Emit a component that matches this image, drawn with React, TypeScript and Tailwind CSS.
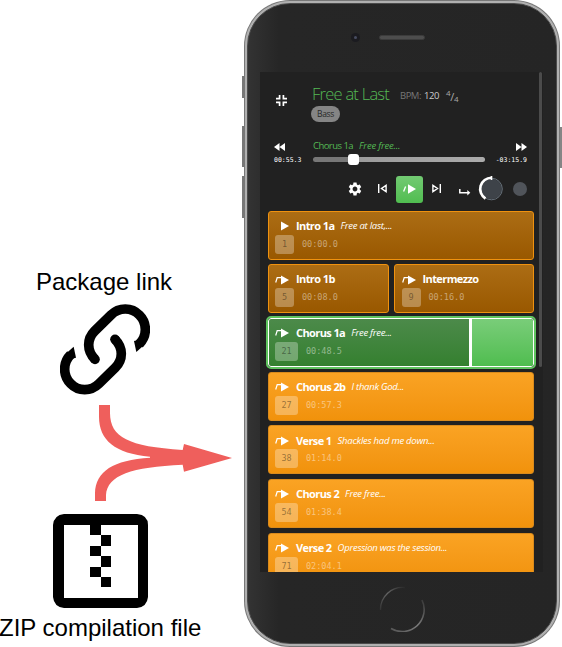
import React from "react";

type Section = {
  title: string;
  lyric?: string;
  bar: string;
  time: string;
  tone: "dim" | "bright" | "active";
  start?: boolean;
  width?: string;
};

const rows: Section[][] = [
  [{ title: "Intro 1a", lyric: "Free at last,...", bar: "1", time: "00:00.0", tone: "dim", start: true }],
  [
    { title: "Intro 1b", bar: "5", time: "00:08.0", tone: "dim", width: "w-[121.5px]" },
    { title: "Intermezzo", bar: "9", time: "00:16.0", tone: "dim" },
  ],
  [{ title: "Chorus 1a", lyric: "Free free...", bar: "21", time: "00:48.5", tone: "active" }],
  [{ title: "Chorus 2b", lyric: "I thank God...", bar: "27", time: "00:57.3", tone: "bright" }],
  [{ title: "Verse 1", lyric: "Shackles had me down...", bar: "38", time: "01:14.0", tone: "bright" }],
  [{ title: "Chorus 2", lyric: "Free free...", bar: "54", time: "01:38.4", tone: "bright" }],
  [{ title: "Verse 2", lyric: "Opression was the session...", bar: "71", time: "02:04.1", tone: "bright" }],
];

const tones = {
  dim: "border border-[#f0920f] bg-linear-to-b from-[#ac6d14] to-[#995800]",
  bright: "border border-[#d98a1c] bg-linear-to-b from-[#faa323] to-[#f1920b]",
  active:
    "border border-white outline-2 outline-[#5fc45f] bg-linear-to-b from-[#4c8a4a] to-[#34802f]",
};

function JumpPlay({ start = false }: { start?: boolean }) {
  return (
    <svg className="h-[10px] w-[14px] shrink-0" viewBox="0 0 14 10">
      {!start && <path d="M.7 7.500 2.200 2.700H7" fill="none" stroke="#fff" strokeWidth="1.200" />}
      <path d="M6 .5 14 5 6 9.500Z" fill="#fff" />
    </svg>
  );
}

function Card({ s }: { s: Section }) {
  const wide = s.bar.length > 1;
  return (
    <div
      className={`relative h-[49px] shrink-0 overflow-hidden rounded-[3px] pl-[6.5px] pt-[8px] ${tones[s.tone]} ${s.width ?? "w-auto grow"}`}
    >
      {s.tone === "active" && (
        <div className="absolute inset-y-0 right-0 w-[64px] border-l-[3px] border-white bg-linear-to-b from-[#79cd79] to-[#4fbd4f]" />
      )}
      <div className="flex h-[13px] items-center whitespace-nowrap text-white">
        <JumpPlay start={s.start} />
        <span className="ml-[7px] text-[11px] font-bold tracking-[-0.6px]">{s.title}</span>
        {s.lyric && <span className="ml-[6px] text-[9.5px] italic tracking-[-0.25px]">{s.lyric}</span>}
      </div>
      <div className="mt-[2px] flex items-center font-['DejaVu_Sans_Mono',monospace] text-[8.5px] text-white/45">
        <span
          className={`flex h-[19px] items-center justify-center rounded-[3px] bg-white/30 text-black/40 ${wide ? "w-[23px]" : "w-[19px]"}`}
        >
          {s.bar}
        </span>
        <span className="ml-[8px]">{s.time}</span>
      </div>
    </div>
  );
}

function Header() {
  return (
    <div className="flex h-[56px] pl-[16px] pt-[13px]">
      <svg className="mt-[10px] h-[11px] w-[11px]" viewBox="0 0 11 11" fill="none" stroke="#fff" strokeWidth="1.7">
        <path d="M0 3.6h3.6V0M7.4 0v3.6H11M0 7.4h3.6V11M7.4 11V7.4H11" />
      </svg>
      <div className="ml-[24px]">
        <div className="flex h-[20px] items-center whitespace-nowrap">
          <span className="ml-[1px] mt-[-2px] w-[88px] text-[16.5px] font-light tracking-[-0.75px] text-[#54b854]">Free at Last</span>
          <span className="mt-[2px] w-[24px] text-[9.5px] tracking-[-0.5px] text-[#777]">BPM:</span>
          <span className="mt-[2px] w-[22px] text-[9.5px] tracking-[-0.4px] text-[#ccc]">120</span>
          <span className="mt-[2px] flex items-center text-[8px] leading-none tracking-[-0.3px] text-[#aaa]">
            <span className="mb-[6px]">4</span>
            <span className="text-[11px]">/</span>
            <span className="mt-[6px]">4</span>
          </span>
        </div>
        <div className="mt-[1px] flex h-[16px] w-[29px] items-center justify-center rounded-full bg-[#858585] text-[8.5px] tracking-[-0.3px] text-[#282828]">
          Bass
        </div>
      </div>
    </div>
  );
}

function Timeline() {
  return (
    <div className="mt-[10px] flex h-[30px] pl-[14px]">
      <div className="w-[39px]">
        <svg className="mt-[4.5px] h-[8px] w-[11px]" viewBox="0 0 11 8" fill="#fff">
          <path d="M5.5 0v8L0 4ZM11 0v8L5.5 4Z" />
        </svg>
        <div className="mt-[4.5px] font-['DejaVu_Sans_Mono',monospace] text-[6.5px] leading-[10px] text-white">00:55.3</div>
      </div>
      <div className="w-[172px]">
        <div className="flex h-[16px] items-center whitespace-nowrap text-[9.5px] text-[#54b854]">
          <span className="w-[46px] tracking-[-0.55px]">Chorus 1a</span>
          <span className="italic tracking-[-0.2px]">Free free...</span>
        </div>
        <div className="flex h-[11px] items-center">
          <div className="h-[5px] w-[35px] rounded-l-full bg-[#777]" />
          <div className="h-[11px] w-[11px] rounded-[3px] bg-white" />
          <div className="h-[5px] grow rounded-r-full bg-linear-to-r from-[#9b9b9b] to-[#ababab]" />
        </div>
      </div>
      <div className="flex w-[42px] flex-col items-end">
        <svg className="mt-[4.5px] h-[8px] w-[11px]" viewBox="0 0 11 8" fill="#fff">
          <path d="M0 0v8l5.5-4ZM5.500 0v8L11 4Z" />
        </svg>
        <div className="mt-[4.5px] font-['DejaVu_Sans_Mono',monospace] text-[6.5px] leading-[10px] text-white">-03:15.9</div>
      </div>
    </div>
  );
}

function Toolbar() {
  return (
    <div className="mt-[8px] flex h-[27px] items-center pl-[87px]">
      <svg className="mt-[-2px] h-[16px] w-[16px]" viewBox="0 0 24 24" fill="#fff">
        <path d="M19.140 12.940c.04-.3.060-.61.060-.94 0-.32-.02-.64-.07-.94l2.030-1.580c.18-.14.230-.41.120-.61l-1.920-3.320c-.12-.22-.37-.29-.59-.22l-2.390.96c-.5-.38-1.030-.7-1.620-.94l-.36-2.540c-.04-.24-.24-.41-.48-.41h-3.840c-.24 0-.43.170-.47.410l-.36 2.540c-.59.240-1.130.570-1.620.94l-2.390-.96c-.22-.08-.47 0-.59.220L2.740 8.870c-.12.210-.08.470.120.610l2.030 1.580c-.05.300-.09.630-.09.940s.020.640.070.940l-2.030 1.580c-.18.140-.23.410-.12.610l1.920 3.320c.12.220.37.290.59.220l2.390-.96c.5.380 1.030.700 1.620.940l.36 2.540c.05.240.24.410.48.410h3.840c.24 0 .44-.17.470-.41l.36-2.540c.59-.24 1.130-.56 1.620-.94l2.390.96c.22.080.47 0 .59-.22l1.920-3.320c.12-.22.070-.47-.12-.61l-2.010-1.580zM12 15.600c-1.980 0-3.600-1.620-3.600-3.600s1.620-3.600 3.600-3.600 3.600 1.620 3.600 3.600-1.620 3.600-3.600 3.600z" />
      </svg>
      <svg className="ml-[15px] mt-[-2px] h-[9px] w-[9px]" viewBox="0 0 9 9" fill="none" stroke="#fff" strokeWidth="1.4">
        <path d="M.7 0v9M8.100 1.400 3.500 4.500l4.600 3.100Z" />
      </svg>
      <div className="ml-[9px] flex h-[27px] w-[27px] items-center justify-center rounded-[3px] bg-linear-to-b from-[#72ca72] to-[#50bd50]">
        <svg className="mt-[-2px] h-[10px] w-[13px]" viewBox="0 0 13 10">
          <path d="M.6 7.500 2.600 2.500" fill="none" stroke="#fff" strokeWidth="1.300" />
          <path d="M5 .2 13 5 5 9.800Z" fill="#fff" />
        </svg>
      </div>
      <svg className="ml-[9px] mt-[-2px] h-[9px] w-[9px]" viewBox="0 0 9 9" fill="none" stroke="#fff" strokeWidth="1.4">
        <path d="M8.300 0v9M.9 1.400 5.500 4.500.9 7.600Z" />
      </svg>
      <svg className="ml-[18px] mt-[5px] h-[8px] w-[12px]" viewBox="0 0 12 8" fill="none" stroke="#fff" strokeWidth="1.500">
        <path d="M.8 1v3.700H9" />
        <path d="M8.300 2 11.300 4.700 8.300 7.400Z" fill="#fff" stroke="none" />
      </svg>
      <svg className="ml-[7px] mt-[-1px] h-[26px] w-[26px]" viewBox="0 0 26 26" fill="none">
        <circle cx="13.500" cy="13" r="10.200" fill="#3e4349" />
        <circle cx="13.500" cy="13" r="10.800" stroke="#66707a" />
        <path d="M13.500 1.700A11.300 11.300 0 0 0 7.500 22.600" stroke="#fff" strokeWidth="2.600" />
        <path d="M13.500 0v4" stroke="#fff" strokeWidth="1.600" />
      </svg>
      <div className="ml-[9px] mt-[-2px] h-[14px] w-[14px] rounded-full bg-[#50545a]" />
    </div>
  );
}

function Phone() {
  return (
    <div className="relative h-[647px] w-[320px] shrink-0 pl-[2px]">
      <div className="absolute left-0 top-[76px] h-[22px] w-[4px] bg-[#777]" />
      <div className="absolute left-0 top-[126px] h-[41px] w-[4px] bg-[#777]" />
      <div className="absolute left-0 top-[176px] h-[42px] w-[4px] bg-[#777]" />
      <div className="absolute right-0 top-[127px] h-[41px] w-[4px] bg-[#858585]" />
      <div className="relative h-[647px] w-[316px] rounded-[46px] bg-[#777] p-[1px]">
        <div className="h-full rounded-[45px] bg-[#b0b0b0] p-[2px]">
          <div className="h-full rounded-[43px] border border-[#4b4b4b] bg-linear-to-r from-[#333] via-[#262626] via-10% to-[#252525] pl-[12px]">
            <div className="flex h-[68px] pl-[91px] pt-[31px]">
              <div className="mt-[-2px] flex h-[9px] w-[9px] items-center justify-center rounded-full bg-[#1b1b20]">
                <div className="h-[3px] w-[3px] rounded-full bg-[#484d61]" />
              </div>
              <div className="ml-[19px] mt-[-0.5px] h-[5px] w-[46px] rounded-full border border-[#3c3c3c] bg-[#4d4d4d]" />
            </div>
            <div className="flex h-[500px] w-[283px] overflow-hidden bg-[#212121]">
              <div className="w-[279px] shrink-0">
                <Header />
                <Timeline />
                <Toolbar />
                <div className="mt-[7.500px] flex flex-col gap-[4.700px] pl-[7.500px] pr-[5.500px]">
                  {rows.map((r, i) => (
                    <div className="flex gap-[5px]" key={i}>
                      {r.map((s) => (
                        <Card key={s.title} s={s} />
                      ))}
                    </div>
                  ))}
                </div>
              </div>
              <div className="h-[295px] w-[3px] rounded-full bg-[#4b4b4b]" />
            </div>
            <svg className="ml-[119px] mt-[13.5px] h-[46px] w-[46px]" viewBox="0 0 46 46" fill="none">
              <defs>
                <linearGradient id="ringTop" x1="0" y1="1" x2="1" y2="0">
                  <stop stopColor="#333" />
                  <stop offset=".5" stopColor="#666" />
                  <stop offset="1" stopColor="#292929" />
                </linearGradient>
                <linearGradient id="ringBottom" x1="0" y1="1" x2="1" y2="0">
                  <stop stopColor="#555" />
                  <stop offset=".5" stopColor="#7c7c7c" />
                  <stop offset="1" stopColor="#383838" />
                </linearGradient>
              </defs>
              <path d="M1.500 24A22 22 0 0 1 26 1.500" stroke="url(#ringTop)" strokeWidth="1.300" />
              <path d="M43 14A22 22 0 0 1 12 42.500" stroke="url(#ringBottom)" strokeWidth="1.600" />
            </svg>
          </div>
        </div>
      </div>
    </div>
  );
}

function Sources() {
  return (
    <div className="h-[647px] w-[242px] shrink-0 font-['Liberation_Sans',Arial,sans-serif] text-[24px] leading-[28px] text-black">
      <div className="whitespace-nowrap pl-[36px] pt-[268px]">Package link</div>
      <svg className="ml-[60px] mt-[8px] h-[91px] w-[90px]" viewBox="180 132 270 273">
        <g id="half-link">
          <path
            d="M285 298C260 273 260 237 284 213L333 165C357 141 395 141 418 165C442 189 442 228 418 252"
            fill="none"
            stroke="#000"
            strokeWidth="29"
          />
          <circle cx="285" cy="298" r="14.500" />
          <path d="M402 243 409 276 430 257 414 240Z" />
        </g>
        <use href="#half-link" transform="rotate(180 315 268)" />
      </svg>
      <svg className="ml-[95px] mt-[10px] h-[96px] w-[137px]" viewBox="285 435 411 288" fill="#ef5f5c">
        <path d="M297 435H330V460C331 532 385 560 548 570L552 552 696 594 552 635 548 614C395 621 322 645 318 705V723H285V700C287 633 340 600 450 593V590C345 580 297 540 297 470Z" />
      </svg>
      <svg className="ml-[53px] mt-[13px] h-[94px] w-[95px]" viewBox="0 0 95 94">
        <path
          fillRule="evenodd"
          d="M11 0H84Q95 1 95 11V83Q94 93 84 94H11Q1 93 0 83V11Q1 1 11 0ZM11 11V84H85V11Z"
        />
        <path d="M37 11h11v10H37ZM48 21h10v11H48ZM37 32h11v10H37ZM48 42h10v11H48ZM37 53h11v10H37ZM48 63h10v10H48Z" />
      </svg>
      <div className="ml-[-1px] mt-[6px] whitespace-nowrap">ZIP compilation file</div>
    </div>
  );
}

export default function App() {
  return (
    <div className="flex h-[647px] w-[562px] overflow-hidden bg-white font-['Open_Sans','Noto_Sans',sans-serif] [&_svg]:block">
      <Sources />
      <Phone />
    </div>
  );
}
